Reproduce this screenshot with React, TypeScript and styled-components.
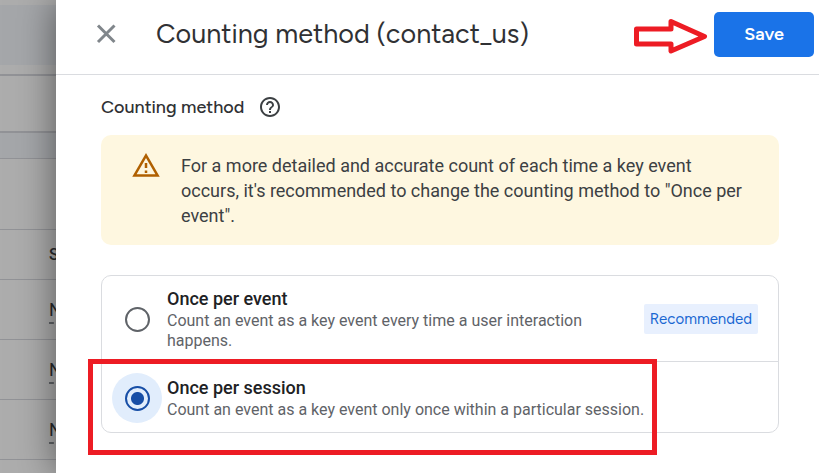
import React from "react";
import styled, { createGlobalStyle } from "styled-components";

const GlobalStyle = createGlobalStyle`
  *, *::before, *::after { box-sizing: border-box; }
  body {
    margin: 0;
    background: #fff;
    color: #3c4043;
    font-family: Roboto, "Liberation Sans", sans-serif;
  }
`;

const productFont = `Figtree, Lato, "Open Sans", sans-serif`;
const annotationRed = "#ed1c24";

const Shell = styled.div`
  display: grid;
  grid-template-columns: 56px minmax(0, 1fr);
  min-height: 100vh;
  overflow: hidden;
`;

const Backdrop = styled.div`
  background: #adadad;
  overflow: hidden;
  height: 100vh;
`;

const Band = styled.div<{ $height: number; $tinted?: boolean; $line?: number }>`
  display: flex;
  align-items: center;
  height: ${(p) => p.$height}px;
  padding-left: 49px;
  white-space: nowrap;
  font-size: 16px;
  font-weight: 500;
  color: #2b2c2e;
  background: ${(p) => (p.$tinted ? "#a5a7aa" : "transparent")};
  border-bottom: ${(p) => p.$line ?? 0}px solid #929397;
`;

const Dotted = styled.span`
  margin-top: 3px;
  font-size: 18px;
  font-weight: 400;
  line-height: 24px;
  border-bottom: 2px dashed #606468;
`;

const Sheet = styled.main`
  position: relative;
  background: #fff;
  box-shadow: 0 0 36px rgba(0, 0, 0, 0.5);
`;

const Header = styled.header`
  display: flex;
  align-items: center;
  height: 75px;
  padding: 0 5px 6px 38px;
  border-bottom: 1px solid #dadce0;
`;

const CloseButton = styled.button`
  display: flex;
  width: 24px;
  height: 24px;
  margin-right: 38px;
  padding: 0;
  border: 0;
  background: none;
  cursor: pointer;
`;

const Title = styled.h1`
  flex: 1;
  margin: 0;
  font: 400 27px/36px ${productFont};
  color: #303134;
`;

const ArrowIcon = styled.svg`
  width: 76px;
  height: 36px;
  margin: 4px 5px 0 0;
`;

const SaveButton = styled.button`
  width: 100px;
  height: 45px;
  border: 0;
  border-radius: 5px;
  background: #1a73e8;
  color: #fff;
  font: 600 18px/24px ${productFont};
  cursor: pointer;
`;

const Content = styled.div`
  padding: 20px 40px 40px 45px;
`;

const SectionHeading = styled.div`
  display: flex;
  align-items: center;
  gap: 14px;
  height: 24px;
  margin-bottom: 16px;
`;

const SectionTitle = styled.h2`
  margin: 0;
  font: 500 18px/24px ${productFont};
  color: #303134;
`;

const HelpButton = styled.button`
  display: flex;
  padding: 0;
  border: 0;
  background: none;
  cursor: pointer;
`;

const Notice = styled.section`
  display: flex;
  gap: 20px;
  padding: 18px 30px 17px;
  border-radius: 10px;
  background: #fef7e0;
  font-size: 18px;
  line-height: 25px;

  svg { flex: none; }
  p { margin: 0; }
`;

const Options = styled.div`
  position: relative;
  margin-top: 30px;
  border: 1px solid #dadce0;
  border-radius: 10px;
`;

const Option = styled.label<{ $compact?: boolean }>`
  display: flex;
  align-items: center;
  padding: ${(p) => (p.$compact ? "14px 20px 12px 10px" : "11px 20px 10px 10px")};
  cursor: pointer;

  & + & { border-top: 1px solid #dadce0; }
`;

const RadioHalo = styled.span`
  display: flex;
  flex: none;
  align-items: center;
  justify-content: center;
  width: 50px;
  height: 50px;
  margin: -12px 5px -12px 0;
  border-radius: 50%;

  &:has(input:checked) { background: #e1edfc; }
`;

const Radio = styled.input`
  appearance: none;
  width: 25px;
  height: 25px;
  margin: 0;
  border: 2px solid #5f6368;
  border-radius: 50%;

  &:checked {
    border-color: #174ea6;
    background: radial-gradient(circle, #174ea6 6px, transparent 7px);
  }
`;

const OptionText = styled.span`
  display: flex;
  flex: 1;
  flex-direction: column;
`;

const OptionTitle = styled.span`
  font-size: 18px;
  font-weight: 500;
  line-height: 24px;
  color: #202124;
`;

const OptionDescription = styled.span`
  font-size: 16px;
  line-height: 20px;
  color: #5f6368;
`;

const Badge = styled.span`
  margin-left: 40px;
  padding: 3px 6px;
  border-radius: 2px;
  background: #e8f0fe;
  color: #1967d2;
  font: 400 15px/24px ${productFont};
`;

const Highlight = styled.div`
  position: absolute;
  left: -14px;
  right: 121px;
  bottom: -23px;
  height: 96px;
  border: 5px solid ${annotationRed};
  pointer-events: none;
`;

const rows = ["N", "N", "N"];

export default function App() {
  return (
    <Shell>
      <GlobalStyle />
      <Backdrop aria-hidden="true">
        <Band $height={5} />
        <Band $height={60} $tinted />
        <Band $height={11} $line={2} />
        <Band $height={57} $line={2} />
        <Band $height={26} $tinted $line={1} />
        <Band $height={71} $line={1} />
        <Band $height={50} $line={1}>S</Band>
        {rows.map((value, index) => (
          <Band key={index} $height={60} $line={1}>
            <Dotted>{value}</Dotted>
          </Band>
        ))}
      </Backdrop>
      <Sheet>
        <Header>
          <CloseButton aria-label="Close">
            <svg width="24" height="24" viewBox="0 0 24 24" fill="none" stroke="#80868b" strokeWidth="3">
              <path d="M4 3.500 20.500 20M20.500 3.500 4 20" />
            </svg>
          </CloseButton>
          <Title>Counting method (contact_us)</Title>
          <ArrowIcon viewBox="0 0 76 36" fill="none" stroke={annotationRed} strokeWidth="5" strokeLinejoin="round" aria-hidden="true">
            <path d="M3.500 11H38V3.500L71.500 18.500 38 33V26H3.500Z" />
          </ArrowIcon>
          <SaveButton>Save</SaveButton>
        </Header>
        <Content>
          <SectionHeading>
            <SectionTitle id="method-title">Counting method</SectionTitle>
            <HelpButton aria-label="Help">
              <svg width="24" height="24" viewBox="0 0 24 24" fill="#3c4043">
                <path d="M11 18h2v-2h-2v2zm1-16C6.480 2 2 6.480 2 12s4.480 10 10 10 10-4.480 10-10S17.520 2 12 2zm0 18c-4.410 0-8-3.590-8-8s3.590-8 8-8 8 3.590 8 8-3.590 8-8 8zm0-14c-2.210 0-4 1.790-4 4h2c0-1.100.9-2 2-2s2 .9 2 2c0 2-3 1.750-3 5h2c0-2.250 3-2.500 3-5 0-2.210-1.790-4-4-4z" />
              </svg>
            </HelpButton>
          </SectionHeading>
          <Notice>
            <svg width="30" height="25" viewBox="0 2 24 20" fill="#b06000">
              <path d="M12 5.990 19.530 19H4.470L12 5.990M12 2 1 21h22L12 2zm1 14h-2v2h2v-2zm0-6h-2v4h2v-4z" />
            </svg>
            <p>
              For a more detailed and accurate count of each time a key event occurs, it's recommended to change the
              counting method to "Once per event".
            </p>
          </Notice>
          <Options role="radiogroup" aria-labelledby="method-title">
            <Option>
              <RadioHalo>
                <Radio type="radio" name="method" value="event" />
              </RadioHalo>
              <OptionText>
                <OptionTitle>Once per event</OptionTitle>
                <OptionDescription>
                  Count an event as a key event every time a user interaction happens.
                </OptionDescription>
              </OptionText>
              <Badge>Recommended</Badge>
            </Option>
            <Option $compact>
              <RadioHalo>
                <Radio type="radio" name="method" value="session" defaultChecked />
              </RadioHalo>
              <OptionText>
                <OptionTitle>Once per session</OptionTitle>
                <OptionDescription>
                  Count an event as a key event only once within a particular session.
                </OptionDescription>
              </OptionText>
            </Option>
            <Highlight />
          </Options>
        </Content>
      </Sheet>
    </Shell>
  );
}
